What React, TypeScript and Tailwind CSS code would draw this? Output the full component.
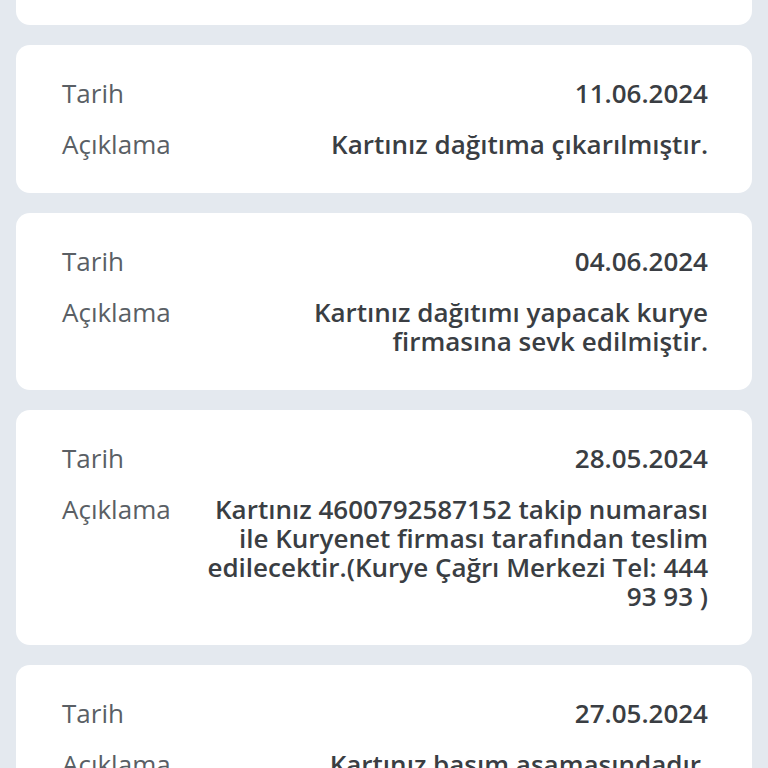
const items = [
  { date: "11.06.2024", text: "Kartınız dağıtıma çıkarılmıştır." },
  { date: "04.06.2024", text: "Kartınız dağıtımı yapacak kurye firmasına sevk edilmiştir." },
  {
    date: "28.05.2024",
    text: "Kartınız 4600792587152 takip numarası ile Kuryenet firması tarafından teslim edilecektir.(Kurye Çağrı Merkezi Tel: 444 93 93 )",
  },
  { date: "27.05.2024", text: "Kartınız basım aşamasındadır." },
];

const Row = ({ label, value }: { label: string; value: string }) => (
  <div className="flex items-start gap-5">
    <div className="w-[113px] shrink-0 text-[#5a5f65]">{label}</div>
    <div className="flex-1 text-right font-semibold text-[#3a3e43]">{value}</div>
  </div>
);

export default function App() {
  return (
    <div
      className="h-[768px] overflow-hidden bg-[#e4e9ef] px-4 text-[26px] leading-[29px]"
      style={{ fontFamily: '"Open Sans", "Noto Sans", sans-serif' }}
    >
      <div className="flex flex-col gap-5">
        <div className="-mt-[20px] h-[45px] rounded-[14px] bg-white" />
        {items.map((it) => (
          <div key={it.date} className="flex flex-col gap-[22px] rounded-[14px] bg-white pt-[34px] pb-[34px] pl-[46px] pr-[44px]">
            <Row label="Tarih" value={it.date} />
            <Row label="Açıklama" value={it.text} />
          </div>
        ))}
      </div>
    </div>
  );
}
